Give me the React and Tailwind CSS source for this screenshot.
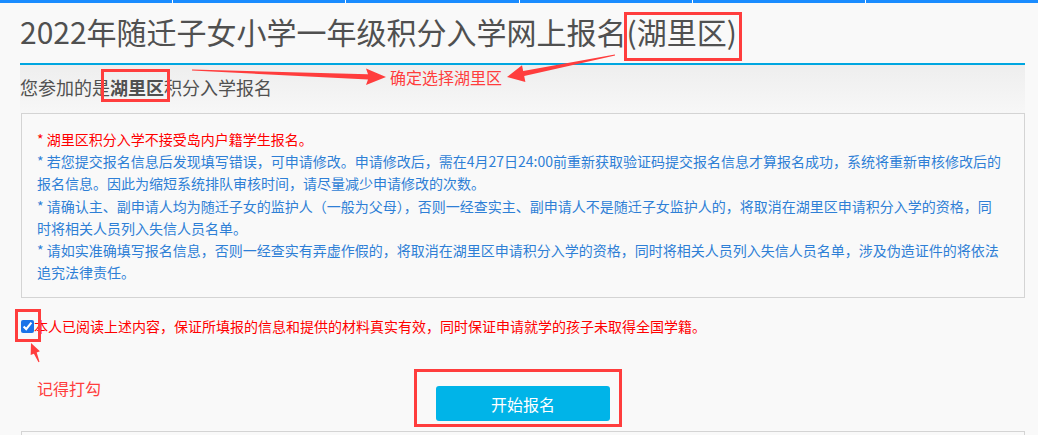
import { useState } from "react";

const notes = [
  { red: true, lines: ["* 湖里区积分入学不接受岛内户籍学生报名。"] },
  {
    lines: [
      "* 若您提交报名信息后发现填写错误，可申请修改。申请修改后，需在4月27日24:00前重新获取验证码提交报名信息才算报名成功，系统将重新审核修改后的",
      "报名信息。因此为缩短系统排队审核时间，请尽量减少申请修改的次数。",
    ],
  },
  {
    lines: [
      "* 请确认主、副申请人均为随迁子女的监护人（一般为父母），否则一经查实主、副申请人不是随迁子女监护人的，将取消在湖里区申请积分入学的资格，同",
      "时将相关人员列入失信人员名单。",
    ],
  },
  {
    lines: [
      "* 请如实准确填写报名信息，否则一经查实有弄虚作假的，将取消在湖里区申请积分入学的资格，同时将相关人员列入失信人员名单，涉及伪造证件的将依法",
      "追究法律责任。",
    ],
  },
];

export default function App() {
  const [agree, setAgree] = useState(true);

  return (
    <div className="relative h-[435px] w-full overflow-hidden bg-[#f9f9f9] font-['Noto_Sans_CJK_SC','Noto_Sans',sans-serif]">
      {/* top bar */}
      <div className="flex h-[3px] gap-px bg-white">
        {[0, 1, 2, 3, 4, 5].map((i) => (
          <div key={i} className="h-full flex-1 bg-[#1a8cff]" />
        ))}
      </div>

      <div className="ml-[20px] w-[1005px]">
        {/* title */}
        <div className="h-[60px] pt-[13px]">
          <h1 className="whitespace-nowrap text-[30px] leading-[30px] font-normal text-[#505050]">
            2022年随迁子女小学一年级积分入学网上报名
            <span className="relative inline-block">
              (湖里区)
              <span className="absolute -top-[4px] -bottom-[15px] -left-[3px] -right-[5px] border-[3px] border-[#ff3d3d]" />
            </span>
          </h1>
        </div>
        <div className="h-[2px] bg-[#00a6e0]" />

        {/* subtitle */}
        <div className="h-[48px] bg-gradient-to-b from-[#eeeeee] to-[#f7f7f7] pt-[10px]">
          <p className="whitespace-nowrap text-[18px] leading-[24px] text-[#505050]">
            您参加的是
            <span className="relative inline-block font-bold">
              湖里区
              <span className="absolute -top-[6px] -bottom-[3px] -left-[9px] -right-[6px] border-[3px] border-[#ff3d3d]" />
            </span>
            积分入学报名
          </p>
        </div>
      </div>

      {/* notice box */}
      <div className="ml-[21px] w-[1004px] border border-[#d4d4d4] bg-[#f9f9f9] px-[15px] py-[14px]">
        {notes.map((n, i) => (
          <div key={i} className={n.red ? "text-[#ff0000]" : "text-[#2e7fd6]"}>
            {n.lines.map((l, j) => (
              <div key={j} className="whitespace-nowrap text-[14px] leading-[22.2px]">
                {l}
              </div>
            ))}
          </div>
        ))}
      </div>

      {/* agree */}
      <div className="ml-[21px] mt-[20px] flex h-[16px] items-center">
        <span className="relative flex">
          <input
            type="checkbox"
            checked={agree}
            onChange={(e) => setAgree(e.target.checked)}
            className="m-0 h-[13px] w-[13px] accent-[#1a73e8]"
          />
          <span className="absolute -top-[11px] -bottom-[9px] -left-[6px] -right-[7px] border-[3px] border-[#ff3d3d]" />
        </span>
        <span className="whitespace-nowrap text-[14px] leading-[16px] text-[#ff0000]">
          本人已阅读上述内容，保证所填报的信息和提供的材料真实有效，同时保证申请就学的孩子未取得全国学籍。
        </span>
      </div>

      {/* button */}
      <div className="ml-[21px] mt-[52px] flex w-[1004px] justify-center">
        <div className="relative">
          <button className="block h-[35px] w-[174px] rounded-[3px] bg-[#00b4e8] text-[16px] text-white">
            开始报名
          </button>
          <span className="absolute -top-[17px] -bottom-[6px] -left-[22px] -right-[12px] border-[3px] border-[#ff3d3d]" />
        </div>
      </div>

      {/* next panel */}
      <div className="ml-[21px] mt-[10px] h-[40px] w-[1004px] border border-[#d4d4d4]" />

      {/* annotations */}
      <div className="absolute left-[390px] top-[66px] whitespace-nowrap text-[16px] leading-[22px] text-[#ff3d3d]">
        确定选择湖里区
      </div>
      <div className="absolute left-[37px] top-[377px] whitespace-nowrap text-[16px] leading-[22px] text-[#ff3d3d]">
        记得打勾
      </div>
      <svg
        className="pointer-events-none absolute left-0 top-0"
        width="1038"
        height="435"
        viewBox="0 0 1038 435"
      >
        <polygon
          fill="#ff3d3d"
          points="192,69.6 368,74.3 366,68.5 386,77 366,85 368,79.6 192,70.4"
        />
        <polygon
          fill="#ff3d3d"
          points="614.9,54.5 523.2,71.1 522,65.3 507,77 525.4,81.9 524.2,76.1 615.1,55.5"
        />
        <polygon
          fill="#ff3d3d"
          points="31,343 39.9,351.2 36.7,352.5 39.5,361.8 38.5,362.2 33.9,353.7 30.7,355"
        />
      </svg>
    </div>
  );
}
